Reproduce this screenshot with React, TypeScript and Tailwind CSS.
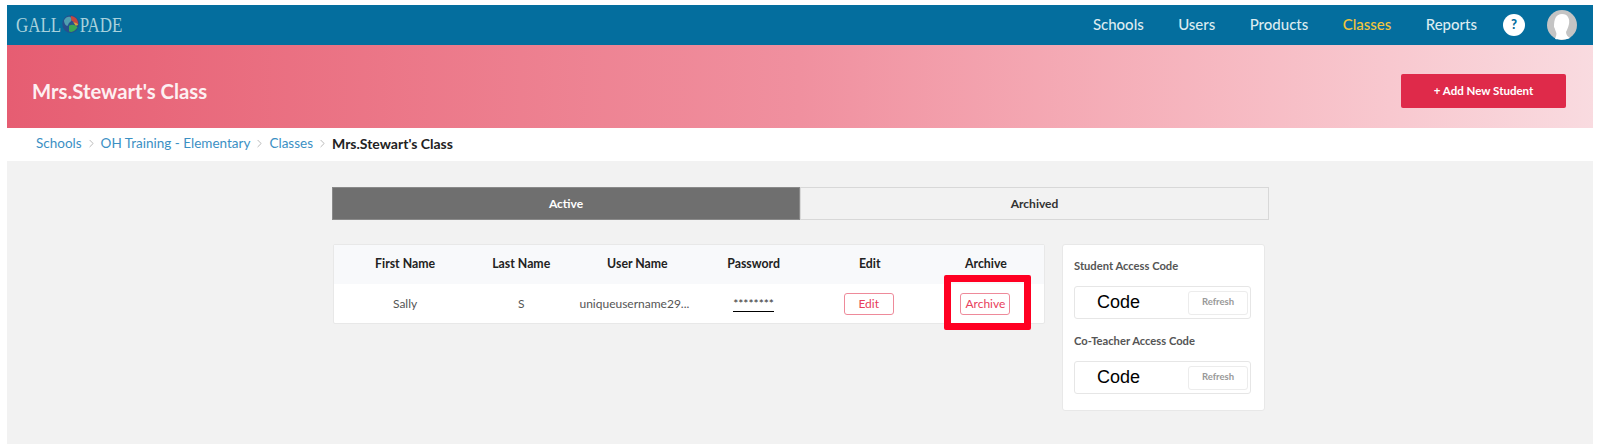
import { ChevronRight } from "lucide-react";

const navLinks = ["Schools", "Users", "Products", "Classes", "Reports"];
const columns = ["First Name", "Last Name", "User Name", "Password", "Edit", "Archive"];

function Globe() {
  return (
    <svg viewBox="0 0 20 20" preserveAspectRatio="none" className="w-[22px] h-[18px] mx-[1px]">
      <circle cx="10" cy="10" r="10" fill="#27508c" />
      <path d="M2 6 C5 1 10 1 11 4 C12 7 8 8 7 11 C6 13 3 12 2 6Z" fill="#4f9fb0" />
      <path d="M10 1 C15 1 19 5 19 10 C16 10 14 8 11 6Z" fill="#c4473f" />
      <path d="M8 12 C12 10 16 11 18 14 C15 18 11 20 8 18Z" fill="#3aa655" />
      <path d="M13 8 C15 8 18 9 19 11 L16 12Z" fill="#d9a23f" />
    </svg>
  );
}

function Avatar() {
  return (
    <svg viewBox="0 0 30 30" className="w-[30px] h-[30px]">
      <circle cx="15" cy="15" r="15" fill="#c4c4c4" />
      <path d="M15 4 C21 4 23 9 22 14 C21 18 20 20 19 22 C19 25 21 27 23 28 C19 30 12 30 8 29 C9 26 10 24 9 22 C8 20 8 18 7 17 C7 9 9 4 15 4Z" fill="#ffffff" />
    </svg>
  );
}

function Crumb() {
  return <ChevronRight size={13} strokeWidth={1.5} className="mx-[3px] text-[#aaaaaa]" />;
}

function CodeField({ label }: { label: string }) {
  return (
    <div>
      <div className="text-[11.2px] leading-[14px] font-bold text-[#555555]">{label}</div>
      <div className="mt-[13px] h-[33px] flex items-center justify-between border border-[#e6e6e6] rounded-[3px] pl-[22px] pr-[2px]">
        <span className="text-[18px] text-black font-['Liberation_Sans',sans-serif]">Code</span>
        <button className="w-[60px] h-[24px] border border-[#ececec] rounded-[3px] text-[9.5px] font-bold text-[#999999]">
          Refresh
        </button>
      </div>
    </div>
  );
}

export default function App() {
  return (
    <div className="w-[1600px] h-[446px] overflow-hidden bg-white pt-[5px] px-[7px] font-['Lato',sans-serif]">
      {/* top nav */}
      <nav className="h-[40px] bg-[#046e9e] flex items-center justify-between pl-[9px] pr-[16px]">
        <div className="flex items-center mt-[-2px] origin-left scale-x-[0.77] text-[22px] text-[#a9d2dc] font-['Liberation_Serif',serif]">
          <span>GALL</span>
          <Globe />
          <span>PADE</span>
        </div>
        <div className="flex items-center">
          <div className="flex items-center gap-[34.4px] mr-[26px] mt-[-1px]">
            {navLinks.map((link) => (
              <a
                key={link}
                className={`text-[15px] font-medium ${link === "Classes" ? "text-[#f2c53d]" : "text-[#dcebf0]"}`}
              >
                {link}
              </a>
            ))}
          </div>
          <div className="w-[22px] h-[22px] rounded-full bg-white flex items-center justify-center text-[13px] font-black text-[#046e9e]">
            ?
          </div>
          <div className="ml-[22px]">
            <Avatar />
          </div>
        </div>
      </nav>

      {/* page title */}
      <header className="h-[83px] pt-[10px] bg-gradient-to-r from-[#e65d72] via-[#f0909f] to-[#f9dbe0] flex items-center justify-between pl-[25px] pr-[27px]">
        <h1 className="text-[20.3px] font-bold text-[#fdf0f2]">Mrs.Stewart's Class</h1>
        <button className="w-[165px] h-[34px] mt-[-1px] rounded-[2px] bg-[#df2a4a] text-[11.5px] font-bold text-white">
          + Add New Student
        </button>
      </header>

      {/* breadcrumb */}
      <div className="h-[33px] pb-[2px] flex items-center pl-[29px] text-[13.5px] text-[#3b90c4]">
        <a>Schools</a>
        <Crumb />
        <a>OH Training - Elementary</a>
        <Crumb />
        <a>Classes</a>
        <Crumb />
        <span className="text-[14px] font-bold text-[#222222]">Mrs.Stewart's Class</span>
      </div>

      {/* content */}
      <main className="h-[283px] bg-[#f2f2f2] pt-[26px] pl-[325px]">
        <div className="w-[937px] h-[33px] flex text-[12px] font-bold">
          <div className="w-[468px] bg-[#6f6f6f] border border-[#8a8a8a] text-white flex items-center justify-center">Active</div>
          <div className="flex-1 border border-[#d8d8d8] text-[#333333] flex items-center justify-center">Archived</div>
        </div>

        <div className="mt-[24px] ml-[1px] flex items-start">
          <div className="relative w-[712px] h-[80px] bg-white border border-[#e8e8e8] rounded-[2px]">
            <div className="h-[39px] bg-[#f8f9fb] pl-[13px] grid grid-cols-6 items-center text-center text-[12.3px] font-bold text-[#222222]">
              {columns.map((c) => (
                <div key={c}>{c}</div>
              ))}
            </div>
            <div className="h-[39px] pl-[13px] grid grid-cols-6 items-center text-center text-[12px] text-[#555555]">
              <div>Sally</div>
              <div>S</div>
              <div className="mr-[6px]">uniqueusername29...</div>
              <div>
                <span className="border-b border-black text-[#333333]">********</span>
              </div>
              <div className="flex justify-center">
                <button className="w-[50px] h-[22px] ml-[-2px] border border-[#ee8a9a] rounded-[3px] text-[#e8405c]">Edit</button>
              </div>
              <div className="flex justify-center">
                <button className="w-[50px] h-[22px] ml-[-1px] border border-[#ee8a9a] rounded-[3px] text-[#e8405c]">Archive</button>
              </div>
            </div>
            {/* red annotation around the archive button */}
            <div className="absolute left-[610px] top-[30px] w-[87px] h-[55px] border-[7px] border-[#ff0022] rounded-[2px]" />
          </div>

          <aside className="ml-[17px] w-[203px] h-[167px] bg-white border border-[#e8e8e8] rounded-[3px] pt-[14px] pl-[11px] pr-[13px] flex flex-col gap-[15px]">
            <CodeField label="Student Access Code" />
            <CodeField label="Co-Teacher Access Code" />
          </aside>
        </div>
      </main>
    </div>
  );
}
